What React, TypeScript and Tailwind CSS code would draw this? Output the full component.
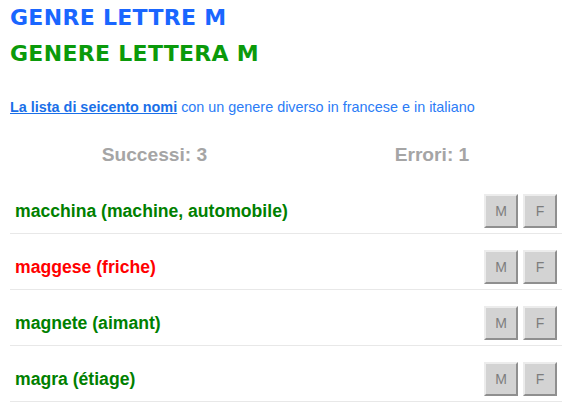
import React from "react";

const words = [
  { it: "macchina", fr: "machine, automobile", ok: true },
  { it: "maggese", fr: "friche", ok: false },
  { it: "magnete", fr: "aimant", ok: true },
  { it: "magra", fr: "étiage", ok: true },
];

function GenderButton({ label }: { label: string }) {
  return (
    <button className="h-[34px] w-[34px] bg-[#d3d3d3] border-2 border-t-[#ececec] border-l-[#ececec] border-b-[#8f8f8f] border-r-[#8f8f8f] text-[14px] text-[#7d7d7d] font-['Liberation_Sans',Arial,sans-serif] leading-none">
      {label}
    </button>
  );
}

export default function App() {
  return (
    <div className="w-[572px] h-[402px] overflow-hidden bg-white px-[10px] font-['Liberation_Sans',Arial,sans-serif]">
      {/* Titles */}
      <h1 className="font-['DejaVu_Sans',sans-serif] font-bold text-[22px] leading-[36px] text-[#1a66ff] tracking-[0.3px]">
        GENRE LETTRE M
      </h1>
      <h2 className="font-['DejaVu_Sans',sans-serif] font-bold text-[22px] leading-[36px] text-[#0b9a0b] tracking-[0.3px]">
        GENERE LETTERA M
      </h2>

      {/* Intro */}
      <p className="mt-[25px] text-[14.4px] leading-[20px] text-[#2b7cf6]">
        <a href="#" className="font-bold underline text-[#1a6fe8]">
          La lista di seicento nomi
        </a>{" "}
        con un genere diverso in francese e in italiano
      </p>

      {/* Score */}
      <div className="mt-[23px] flex pl-[6px] text-[19.2px] leading-[30px] font-bold text-[#a5a5a5]">
        <div className="w-[280px] text-center">Successi: 3</div>
        <div className="w-[272px] pl-[9px] text-center">Errori: 1</div>
      </div>

      {/* Word list */}
      <div className="mt-[8px]">
        {words.map((w) => (
          <div
            key={w.it}
            className="flex items-center justify-between border-b border-[#e8e8e8] pt-[16px] pb-[5px] px-[5px]"
          >
            <span
              className={
                "text-[17.6px] font-bold " +
                (w.ok ? "text-[#008000]" : "text-[#ff0000]")
              }
            >
              {w.it} ({w.fr})
            </span>
            <div className="flex gap-[5px]">
              <GenderButton label="M" />
              <GenderButton label="F" />
            </div>
          </div>
        ))}
      </div>
    </div>
  );
}
